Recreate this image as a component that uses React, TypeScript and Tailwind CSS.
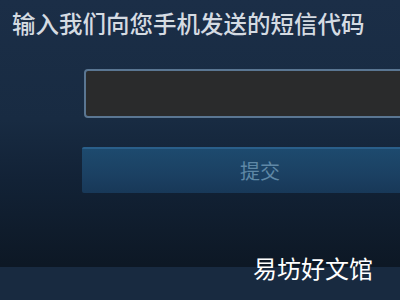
import React from "react";

export default function App() {
  return (
    <div
      className="relative w-[400px] h-[300px] overflow-hidden flex flex-col bg-[linear-gradient(180deg,#1b2e47_0%,#182b42_40%,#122236_60%,#0d1825_88%)]"
      style={{ fontFamily: '"Noto Sans CJK SC", "Noto Sans", sans-serif' }}
    >
      <div className="pl-[12px] pt-[8px] text-[23.5px] leading-[30px] font-medium text-[#d5dbe2] whitespace-nowrap">
        输入我们向您手机发送的短信代码
      </div>
      <div className="ml-[84px] mt-[31px] w-[340px] h-[49px] shrink-0 rounded-[4px] border-2 border-[#5a7692] bg-[#2a2b2c]" />
      <div className="ml-[82px] mt-[29px] w-[356px] h-[46px] shrink-0 rounded-[2px] border-t-2 border-[#2a5f8a] bg-[linear-gradient(180deg,#1d4a6e_0%,#1b4062_60%,#183858_100%)] flex items-center justify-center">
        <span className="text-[20px] leading-none text-[#5f88a6]">提交</span>
      </div>
      <div className="flex-1" />
      <div className="h-[33px] shrink-0 bg-[#182a40]" />
      <div className="absolute left-[253px] top-[252px] text-[24px] leading-[32px] text-white whitespace-nowrap">
        易坊好文馆
      </div>
    </div>
  );
}
